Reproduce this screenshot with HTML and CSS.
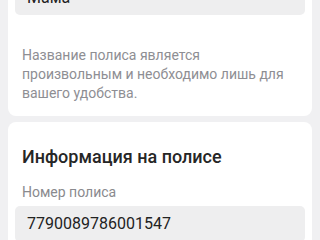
FILE: index.html
```html
<!DOCTYPE html>
<html lang="ru">
<head>
<meta charset="utf-8">
<title>Полис</title>
<link rel="stylesheet" href="styles.css">
</head>
<body>
<div class="page">
  <section class="card card-name">
    <div class="field">Мама</div>
    <p class="help">Название полиса является произвольным и необходимо лишь для вашего удобства.</p>
  </section>
  <section class="card card-info">
    <h2 class="title">Информация на полисе</h2>
    <div class="label">Номер полиса</div>
    <div class="field">7790089786001547</div>
  </section>
</div>
</body>
</html>
```
FILE: styles.css
```css
html, body {
  margin: 0;
  padding: 0;
  background: #f0f0f2;
  font-family: Roboto, "Noto Sans", sans-serif;
  overflow: hidden;
}
.page {
  display: flex;
  flex-direction: column;
  gap: 6px;
  padding: 0 8px;
  margin-top: -37px;
}
.card {
  background: #ffffff;
  border-radius: 8px;
  padding: 0 7px;
}
.card-name {
  padding-top: 16px;
  padding-bottom: 13px;
}
.card-info {
  padding-top: 23px;
  padding-bottom: 16px;
}
.field {
  height: 36px;
  box-sizing: border-box;
  background: #eeeeef;
  border-radius: 5px;
  padding: 0 12px;
  display: flex;
  align-items: center;
  font-size: 16px;
  color: #222222;
}
.help {
  margin: 30.5px 0 0;
  padding: 0 14px 0 7px;
  font-size: 14px;
  line-height: 1.375;
  color: #8e8e93;
}
.title {
  margin: 0;
  padding: 0 7px;
  font-size: 18px;
  line-height: 24px;
  font-weight: 500;
  color: #262626;
}
.label {
  margin-top: 14px;
  margin-bottom: 3px;
  padding: 0 7px;
  font-size: 14px;
  line-height: 1.375;
  color: #8a8a8e;
}
```
